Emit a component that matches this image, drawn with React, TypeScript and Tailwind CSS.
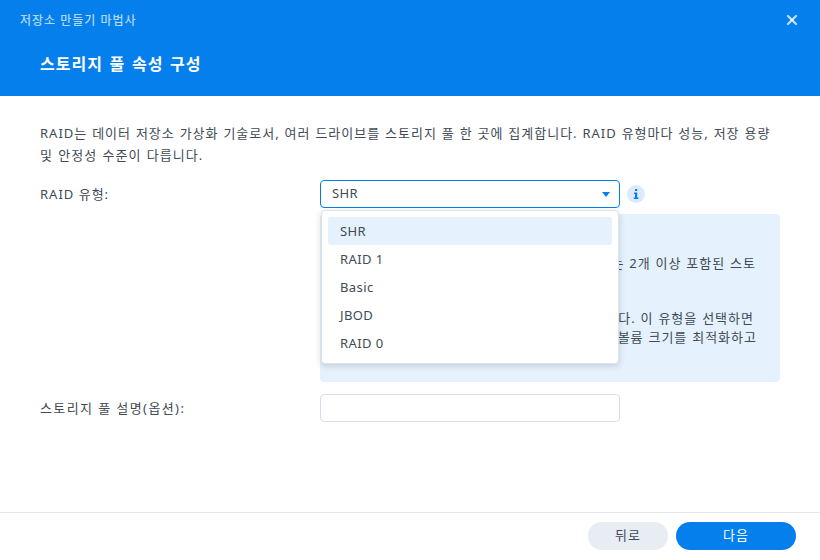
import { X } from 'lucide-react';

const font = "[font-family:'Noto_Sans','Noto_Sans_CJK_KR',sans-serif]";

const raidTypes = ['SHR', 'RAID 1', 'Basic', 'JBOD', 'RAID 0'];

export default function App() {
  return (
    <div className={`w-[820px] h-[560px] bg-white flex flex-col overflow-hidden text-[13px] tracking-[1px] text-[#414B55] ${font}`}>
      <header className="h-24 bg-[#057FEB] flex flex-col shrink-0">
        <div className="h-10 pl-5 pr-5 flex items-center justify-between">
          <span className="text-xs font-medium text-white/70 pt-px">저장소 만들기 마법사</span>
          <X className="w-4 h-4 text-white/75" strokeWidth={3.5} />
        </div>
        <h1 className="pl-10 mt-3 text-base leading-6 font-bold text-white [word-spacing:1.5px]">스토리지 풀 속성 구성</h1>
      </header>

      <main className="flex-1 px-10 pt-[26px]">
        <p className="leading-[22px] w-[740px] whitespace-nowrap [word-spacing:0.5px]">
          RAID는 데이터 저장소 가상화 기술로서, 여러 드라이브를 스토리지 풀 한 곳에 집계합니다. RAID 유형마다 성능, 저장 용량
          <br />
          <span className="[word-spacing:1px]">및 안정성 수준이 다릅니다.</span>
        </p>

        <div className="mt-[14px] flex">
          <label className="w-[280px] leading-7">RAID 유형:</label>
          <div className="relative flex flex-col">
            <div className="flex items-center">
              <div className="w-[300px] h-7 pl-[11px] pr-[9px] rounded-[4px] border border-[#057FEB] flex items-center justify-between">
                <span className="tracking-[0.4px]">SHR</span>
                <span className="w-0 h-0 border-x-[4px] border-x-transparent border-t-[5px] border-t-[#057FEB]" />
              </div>
              <div className="ml-[7px] w-[18px] h-[18px] rounded-full bg-[#DCEBFB] flex items-center justify-center">
                <svg width="6" height="10" viewBox="0 0 6 10" fill="#057FEB">
                  <rect x="2" y="0" width="2.2" height="2" />
                  <path d="M1 3.5h3.2v5H5.4V10H.8V8.5H2V5H1z" />
                </svg>
              </div>
            </div>

            <div className="mt-1.5 w-[460px] h-[168px] rounded-[4px] bg-[#E5F1FC] pt-[40px] pr-[23px] leading-[19px] text-right whitespace-nowrap [word-spacing:0.5px]">
              <p className="pr-px">는 2개 이상 포함된 스토</p>
              <p className="mt-[36px] pr-[3px]">다. 이 유형을 선택하면</p>
              <p>볼륨 크기를 최적화하고</p>
            </div>

            <ul className="absolute left-px top-[30px] w-[298px] h-[154px] p-[6px] bg-white rounded-[4px] border border-[#DCE3EA] shadow-[0_2px_6px_rgba(40,60,90,0.2)] tracking-[0.4px]">
              {raidTypes.map((type, i) => (
                <li
                  key={type}
                  className={`h-7 px-3 pt-0.5 flex items-center rounded-[3px] ${i === 0 ? 'bg-[#E5F1FC]' : ''}`}
                >
                  {type}
                </li>
              ))}
            </ul>
          </div>
        </div>

        <div className="mt-3 flex">
          <label className="w-[280px] leading-7 tracking-[1.4px]">스토리지 풀 설명(옵션):</label>
          <div className="w-[300px] h-7 rounded-[4px] border border-[#D5DEE8] bg-white" />
        </div>
      </main>

      <footer className="h-12 shrink-0 border-t border-[#E3E8EE] pt-[9px] pr-6 flex justify-end gap-2">
        <button className="w-20 h-7 rounded-full bg-[#E8EDF3] text-[#414B55]">뒤로</button>
        <button className="w-[120px] h-7 rounded-full bg-[#057FEB] text-white">다음</button>
      </footer>
    </div>
  );
}
